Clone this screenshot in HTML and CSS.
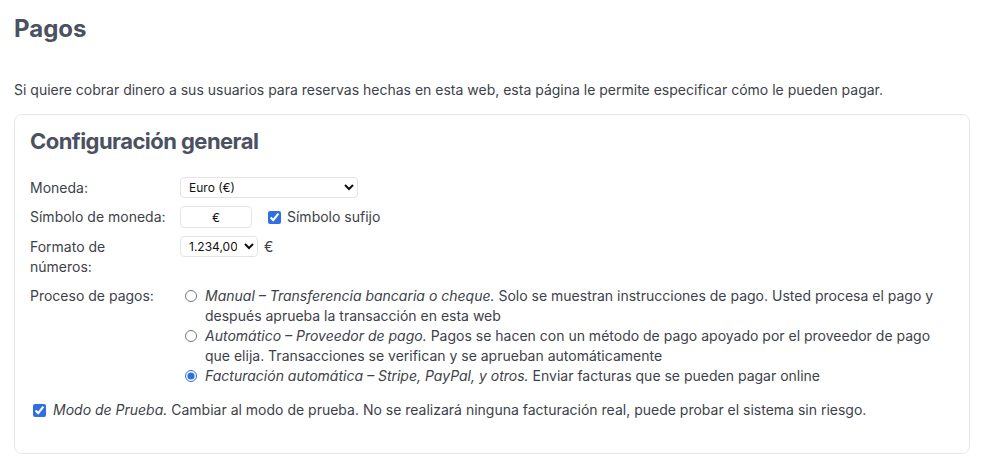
FILE: index.html
```
<!DOCTYPE html>
<html lang="es">
<head>
<meta charset="utf-8">
<title>Pagos</title>
<link rel="stylesheet" href="styles.css">
</head>
<body>
<div class="page">
  <h1 class="page-title">Pagos</h1>
  <p class="intro">Si quiere cobrar dinero a sus usuarios para reservas hechas en esta web, esta página le permite especificar cómo le pueden pagar.</p>
  <section class="card">
    <h2 class="card-title">Configuración general</h2>
    <div class="form-grid">
      <label class="field-label">Moneda:</label>
      <div class="field">
        <select class="select select-currency"><option>Euro (€)</option></select>
      </div>

      <label class="field-label">Símbolo de moneda:</label>
      <div class="field">
        <input class="text-input symbol-input" type="text" value="€">
        <label class="check-label"><input type="checkbox" class="checkbox" checked> Símbolo sufijo</label>
      </div>

      <label class="field-label">Formato de<br>números:</label>
      <div class="field">
        <select class="select select-format"><option>1.234,00</option></select>
        <span class="suffix">€</span>
      </div>

      <label class="field-label">Proceso de pagos:</label>
      <div class="radio-list">
        <label class="radio-row"><input type="radio" name="proc" class="radio"><span class="radio-text"><em>Manual – Transferencia bancaria o cheque.</em> Solo se muestran instrucciones de pago. Usted procesa el pago y después aprueba la transacción en esta web</span></label>
        <label class="radio-row"><input type="radio" name="proc" class="radio"><span class="radio-text"><em>Automático – Proveedor de pago.</em> Pagos se hacen con un método de pago apoyado por el proveedor de pago que elija. Transacciones se verifican y se aprueban automáticamente</span></label>
        <label class="radio-row"><input type="radio" name="proc" class="radio" checked><span class="radio-text"><em>Facturación automática – Stripe, PayPal, y otros.</em> Enviar facturas que se pueden pagar online</span></label>
      </div>
    </div>
    <label class="test-mode"><input type="checkbox" class="checkbox" checked><span><em>Modo de Prueba.</em> Cambiar al modo de prueba. No se realizará ninguna facturación real, puede probar el sistema sin riesgo.</span></label>
  </section>
</div>
</body>
</html>
```
FILE: styles.css
```
* { box-sizing: border-box; }
html, body { margin: 0; background: #ffffff; }
body {
  font-family: Inter, "Noto Sans", sans-serif;
  font-size: 14px;
  line-height: 20px;
  color: #3d424a;
}
.page { padding: 0 14px; }
.page-title {
  margin: 0;
  padding-top: 14px;
  font-size: 24px;
  line-height: 30px;
  font-weight: 700;
  color: #4a5161;
}
.intro {
  margin: 36px 0 14px;
  font-size: 14px;
  line-height: 20px;
}
.card {
  border: 1px solid #e6e7ea;
  border-radius: 8px;
  padding: 12px 15px 33px;
  width: 956px;
}
.card-title {
  margin: 0 0 22px;
  font-size: 22px;
  line-height: 28px;
  font-weight: 700;
  letter-spacing: -0.55px;
  color: #4a5161;
}
.form-grid {
  display: grid;
  grid-template-columns: 150px 1fr;
  row-gap: 8px;
}
.field-label { padding-top: 1px; white-space: nowrap; }
.field { display: flex; align-items: flex-start; gap: 6px; }
.select {
  font-family: Inter, "Noto Sans", sans-serif;
  font-size: 12px;
  height: 21px;
  border: 1px solid #e3e4e7;
  border-radius: 4px;
  background: #fff;
  color: #111;
  padding: 0 4px;
}
.select-currency { width: 178px; }
.select-format { width: 78px; }
.text-input {
  font-family: Inter, "Noto Sans", sans-serif;
  font-size: 12px;
  height: 22px;
  border: 1px solid #e3e4e7;
  border-radius: 4px;
  color: #111;
}
.symbol-input { width: 72px; text-align: center; }
.check-label { display: flex; align-items: center; gap: 6px; margin-left: 10px; padding-top: 1px; }
.checkbox { margin: 0; width: 13px; height: 13px; accent-color: #2f6fe4; }
.suffix { padding-top: 1px; }
.radio-list { display: flex; flex-direction: column; padding-top: 1px; padding-right: 10px; }
.radio-row { display: flex; align-items: flex-start; gap: 8px; padding-left: 5px; }
.radio-text { display: block; }
.radio { margin: 4px 0 0; width: 12px; height: 12px; flex: none; accent-color: #2f6fe4; }
.test-mode { display: flex; align-items: flex-start; gap: 7px; margin-top: 14px; padding-left: 3px; }
.test-mode .checkbox { margin-top: 4px; flex: none; }
```
